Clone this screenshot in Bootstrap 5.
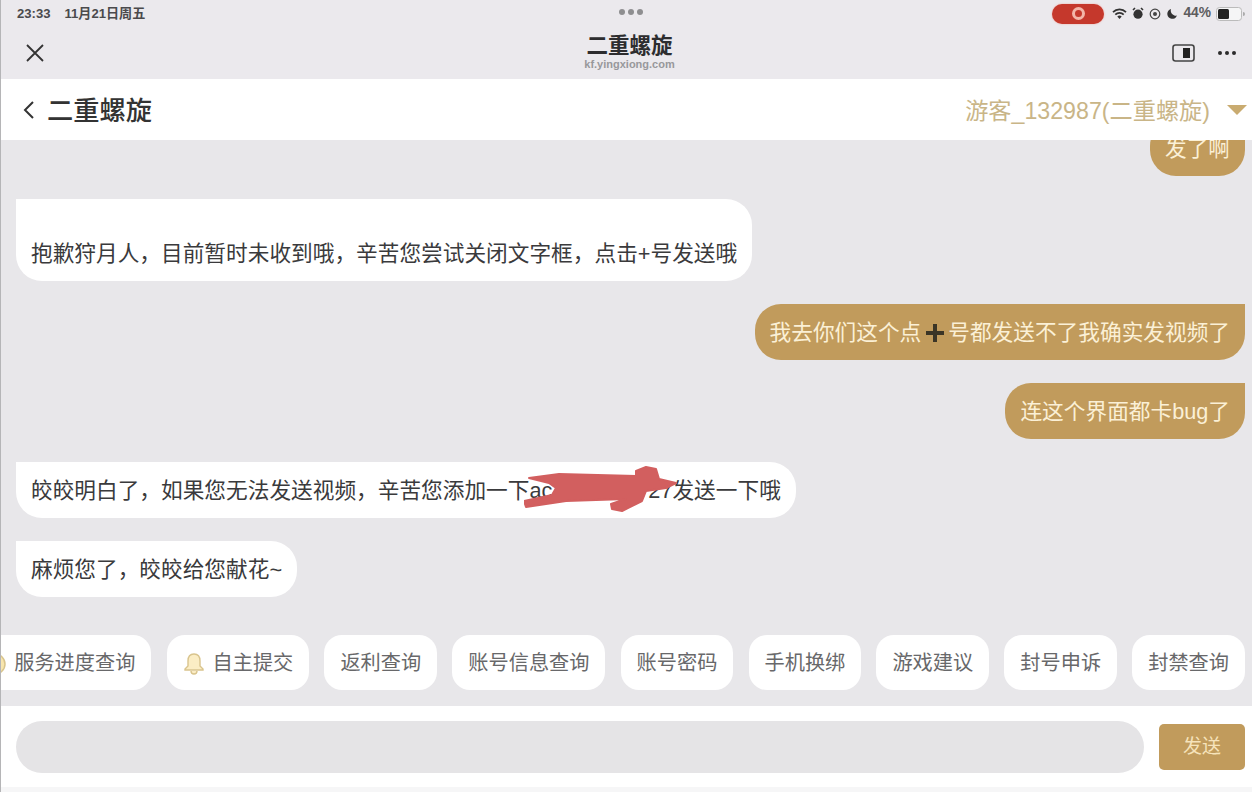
<!DOCTYPE html>
<html lang="zh-CN">
<head>
  <meta charset="UTF-8">
  <title>二重螺旋</title>
  <link rel="stylesheet" href="https://cdn.jsdelivr.net/npm/bootstrap@5.3.0/dist/css/bootstrap.min.css">
  <style>
    html, body {
      height: 100%;
      overflow: hidden;
    }

    body {
      font-family: "Liberation Sans", "Noto Sans CJK SC", sans-serif;
      background: #e8e7ea;
      color: #333;
    }

    .app-frame {
      height: 792px;
      border-left: 1px solid #b5b5b7;
    }

    /* system + browser chrome */
    .chrome-bar {
      height: 79px;
      background: #ebe9ed;
    }

    .status-row {
      height: 27px;
      padding: 0 6px 0 16px;
      font-size: 13.1px;
      font-weight: 700;
      color: #4a4a4c;
    }

    .time-gap {
      gap: 14px;
    }

    .status-gap {
      gap: 5px;
    }

    .batt-text {
      font-size: 13.8px;
      color: #5c5c5e;
    }

    .status-dots {
      left: 618px;
      top: 9px;
      gap: 3px;
    }

    .status-dots i {
      display: block;
      width: 6px;
      height: 6px;
      border-radius: 50%;
      background: #8e8e90;
    }

    .rec-pill {
      width: 52px;
      height: 20px;
      border-radius: 10px;
      background: #c5382c;
      box-shadow: 0 0 2px #f0a59c;
      margin-right: 3px;
    }

    .rec-pill span {
      width: 13px;
      height: 13px;
      border: 3px solid #f3b5a8;
      border-radius: 50%;
    }

    .title-row {
      height: 52px;
      padding: 0 15px 0 24px;
    }

    .title-box {
      left: 6px;
      right: 0;
      top: 7px;
      pointer-events: none;
    }

    .site-title {
      font-size: 21.5px;
      line-height: 24px;
      font-weight: 700;
      color: #2d2d2f;
    }

    .site-url {
      font-size: 11px;
      line-height: 12px;
      font-weight: 700;
      color: #98989b;
    }

    .tool-gap {
      gap: 22px;
    }

    /* page header */
    .chat-head {
      height: 61px;
      background: #fff;
      padding: 0 5px 0 21px;
    }

    .head-title {
      font-size: 26.25px;
      line-height: 32px;
      padding-top: 2px;
      font-weight: 500;
      color: #333;
    }

    .head-user {
      font-size: 23.2px;
      line-height: 30px;
      padding-top: 2px;
      color: #c9b587;
    }

    .head-caret {
      width: 0;
      height: 0;
      border-left: 10px solid transparent;
      border-right: 10px solid transparent;
      border-top: 10px solid #c9ab70;
      margin-left: 17px;
    }

    /* messages */
    .chat-body {
      min-height: 0;
      padding: 0 7px 38px 15px;
      gap: 23px;
    }

    .msg-bubble {
      font-size: 21.68px;
      line-height: 26px;
      padding: 16px 15px 14px;
      flex-shrink: 0;
      white-space: nowrap;
    }

    .msg-in {
      align-self: flex-start;
      background: #fff;
      color: #3a3a3c;
      border-radius: 0 26px 26px 26px;
    }

    .msg-out {
      align-self: flex-end;
      background: #c19b5c;
      color: #fbf0d6;
      border-radius: 26px 0 26px 26px;
    }

    .plus-mark {
      width: 18px;
      height: 18px;
      margin: 0 4.5px;
      vertical-align: -2px;
    }

    .mask-gap {
      display: inline-block;
      width: 96px;
    }

    .scribble {
      left: 508px;
      top: 4px;
      width: 155px;
      height: 50px;
    }

    /* quick links */
    .chip-row {
      padding: 0 7px 16px 0;
      gap: 15.15px;
      overflow: hidden;
    }

    .chip-item {
      flex-shrink: 0;
      height: 55px;
      padding: 2px 16px 0;
      background: #fff;
      border-radius: 18px;
      font-size: 20.2px;
      color: #68686a;
      white-space: nowrap;
    }

    .chip-item svg {
      margin-right: 8px;
    }

    /* composer */
    .composer {
      height: 81px;
      background: #fff;
      padding: 0 7px 0 15px;
      gap: 15px;
    }

    .composer-input {
      height: 52px;
      border-radius: 26px;
      background: #e5e4e6;
    }

    .send-btn {
      width: 86px;
      height: 46px;
      padding-top: 2px;
      border-radius: 5px;
      background: #c19b5c;
      color: #f6e3bb;
      font-size: 19px;
    }

    .page-foot {
      height: 5px;
      background: #f6f6f7;
    }
  </style>
</head>
<body>
  <div class="app-frame d-flex flex-column position-relative">

    <!-- system bar + browser title -->
    <div class="chrome-bar flex-shrink-0 position-relative">
      <div class="status-row d-flex align-items-center justify-content-between">
        <div class="d-flex time-gap">
          <span>23:33</span>
          <span>11月21日周五</span>
        </div>
        <div class="d-flex align-items-center status-gap">
          <div class="rec-pill d-flex align-items-center justify-content-center">
            <span></span>
          </div>
          <svg width="15" height="12" viewBox="0 0 15 12">
            <path d="M1 4.2a9 9 0 0 1 13 0M3.3 6.6a5.8 5.8 0 0 1 8.4 0" fill="none" stroke="#333" stroke-width="1.7"/>
            <path d="M5.3 8.6a3 3 0 0 1 4.4 0L7.5 11z" fill="#333"/>
          </svg>
          <svg width="12" height="13" viewBox="0 0 12 13">
            <circle cx="6" cy="7.2" r="4.6" fill="#333"/>
            <path d="M1 3l2-2M11 3L9 1" stroke="#333" stroke-width="1.6"/>
          </svg>
          <svg width="12" height="12" viewBox="0 0 12 12">
            <circle cx="6" cy="6" r="4.8" fill="none" stroke="#444" stroke-width="1.2"/>
            <circle cx="6" cy="6" r="2" fill="#444"/>
          </svg>
          <svg width="12" height="12" viewBox="0 0 12 12">
            <path d="M5 1a5 5 0 1 0 6 6.6A5.2 5.2 0 0 1 5 1z" fill="#333"/>
          </svg>
          <span class="batt-text">44%</span>
          <svg width="30" height="14" viewBox="0 0 30 14">
            <rect x="0.5" y="0.5" width="25" height="13" rx="3" fill="#f5f5f6" stroke="#bbb"/>
            <rect x="2" y="2" width="11" height="10" rx="1.5" fill="#222"/>
            <path d="M27 5a2 2 0 0 1 0 4z" fill="#aaa"/>
          </svg>
        </div>
      </div>
      <div class="status-dots position-absolute d-flex">
        <i></i><i></i><i></i>
      </div>
      <div class="title-row d-flex align-items-center justify-content-between position-relative">
        <svg width="20" height="20" viewBox="0 0 20 20">
          <path d="M2 2l16 16M18 2L2 18" stroke="#333" stroke-width="1.8" fill="none"/>
        </svg>
        <div class="title-box position-absolute text-center">
          <div class="site-title">二重螺旋</div>
          <div class="site-url">kf.yingxiong.com</div>
        </div>
        <div class="d-flex align-items-center tool-gap">
          <svg width="23" height="18" viewBox="0 0 23 18">
            <rect x="1" y="1" width="21" height="16" rx="2.5" fill="none" stroke="#444" stroke-width="1.6"/>
            <rect x="11" y="4" width="7" height="10" fill="#222"/>
          </svg>
          <svg width="20" height="6" viewBox="0 0 20 6">
            <circle cx="3" cy="3" r="2" fill="#2b2b2b"/>
            <circle cx="10" cy="3" r="2" fill="#2b2b2b"/>
            <circle cx="17" cy="3" r="2" fill="#2b2b2b"/>
          </svg>
        </div>
      </div>
    </div>

    <!-- header -->
    <div class="chat-head flex-shrink-0 d-flex align-items-center justify-content-between">
      <div class="d-flex align-items-center gap-2">
        <svg width="13" height="20" viewBox="0 0 13 20" class="me-1">
          <path d="M11 2L3 10l8 8" fill="none" stroke="#333" stroke-width="2"/>
        </svg>
        <span class="head-title">二重螺旋</span>
      </div>
      <div class="d-flex align-items-center">
        <span class="head-user">游客_132987(二重螺旋)</span>
        <span class="head-caret"></span>
      </div>
    </div>

    <!-- messages -->
    <div class="chat-body flex-grow-1 d-flex flex-column justify-content-end overflow-hidden">
      <div class="msg-bubble msg-out">发了啊</div>
      <div class="msg-bubble msg-in"><br>抱歉狩月人，目前暂时未收到哦，辛苦您尝试关闭文字框，点击+号发送哦</div>
      <div class="msg-bubble msg-out">我去你们这个点<svg class="plus-mark" viewBox="0 0 18 18"><path d="M7 0h4v7h7v4h-7v7H7v-7H0V7h7z" fill="#3b3526"/></svg>号都发送不了我确实发视频了</div>
      <div class="msg-bubble msg-out">连这个界面都卡bug了</div>
      <div class="msg-bubble msg-in position-relative">
        皎皎明白了，如果您无法发送视频，辛苦您添加一下ac<span class="mask-gap"></span>27发送一下哦
        <svg class="scribble position-absolute" viewBox="0 0 155 50">
          <path d="M5 12L35 8L112 10L112 5L122 1L132 3L135 13L152 17L142 22L122 25L118 35L98 45L88 43L87 38L102 33L42 35L2 41L0 35L28 29L32 22L25 17Z" fill="#d25f5f" stroke="#d25f5f" stroke-width="2" stroke-linejoin="round"/>
        </svg>
      </div>
      <div class="msg-bubble msg-in">麻烦您了，皎皎给您献花~</div>
    </div>

    <!-- quick links -->
    <div class="chip-row flex-shrink-0 d-flex justify-content-end">
      <div class="chip-item d-flex align-items-center">
        <svg width="22" height="22" viewBox="0 0 22 22">
          <circle cx="11" cy="11" r="10" fill="#f8e6ae" stroke="#d8c48c" stroke-width="1.5"/>
          <circle cx="8" cy="9" r="1.2" fill="#b9a66e"/>
          <circle cx="14" cy="9" r="1.2" fill="#b9a66e"/>
          <path d="M7 14a5 5 0 0 0 8 0" fill="none" stroke="#b9a66e" stroke-width="1.3"/>
        </svg>
        服务进度查询
      </div>
      <div class="chip-item d-flex align-items-center">
        <svg width="22" height="24" viewBox="0 0 22 24">
          <path d="M11 2c-4 0-6 3-6 7v5l-3 3v1h18v-1l-3-3V9c0-4-2-7-6-7z" fill="#fbedc4" stroke="#d9c48d" stroke-width="1.4"/>
          <path d="M8 19a3 3 0 0 0 6 0" fill="#fbedc4" stroke="#d9c48d" stroke-width="1.4"/>
        </svg>
        自主提交
      </div>
      <div class="chip-item d-flex align-items-center">返利查询</div>
      <div class="chip-item d-flex align-items-center">账号信息查询</div>
      <div class="chip-item d-flex align-items-center">账号密码</div>
      <div class="chip-item d-flex align-items-center">手机换绑</div>
      <div class="chip-item d-flex align-items-center">游戏建议</div>
      <div class="chip-item d-flex align-items-center">封号申诉</div>
      <div class="chip-item d-flex align-items-center">封禁查询</div>
    </div>

    <!-- composer -->
    <div class="composer flex-shrink-0 d-flex align-items-center">
      <div class="composer-input flex-grow-1"></div>
      <div class="send-btn d-flex align-items-center justify-content-center">发送</div>
    </div>
    <div class="page-foot flex-shrink-0"></div>
  </div>

  <script src="https://cdn.jsdelivr.net/npm/bootstrap@5.3.0/dist/js/bootstrap.bundle.min.js"></script>
</body>
</html>
